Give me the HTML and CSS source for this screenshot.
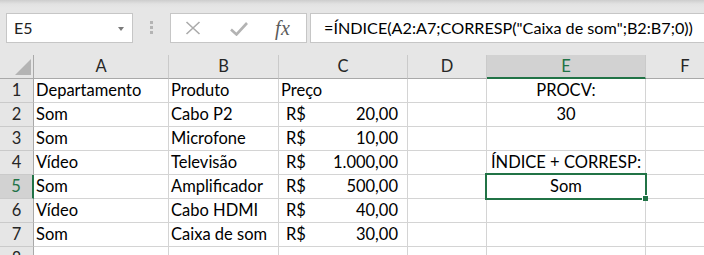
FILE: index.html
```html
<!DOCTYPE html>
<html lang="pt-BR">
<head>
<meta charset="utf-8">
<title>Planilha</title>
<link rel="stylesheet" href="styles.css">
</head>
<body>
<div class="toolbar">
  <div class="namebox"><span>E5</span><i class="caret"></i></div>
  <div class="grip"><i></i><i></i><i></i></div>
  <div class="fxbox">
    <svg class="ic-x" width="16" height="14" viewBox="0 0 16 14"><path d="M1.5 1 L14.5 13 M14.5 1 L1.5 13" stroke="#ababab" stroke-width="1.6" fill="none"/></svg>
    <svg class="ic-ok" width="18" height="14" viewBox="0 0 18 14"><path d="M1 7.5 L6.5 12.5 L17 1" stroke="#b3b3b3" stroke-width="2.6" fill="none"/></svg>
    <span class="fx">fx</span>
  </div>
  <div class="formula">=ÍNDICE(A2:A7;CORRESP("Caixa de som";B2:B7;0))</div>
</div>
<div class="sheet">
  <div class="corner"><i class="tri"></i></div>
  <div class="ch">A</div><div class="ch">B</div><div class="ch">C</div><div class="ch">D</div><div class="ch on">E</div><div class="ch">F</div>

  <div class="rh">1</div>
  <div class="c">Departamento</div><div class="c">Produto</div><div class="c">Preço</div><div class="c"></div><div class="c mid">PROCV:</div><div class="c"></div>

  <div class="rh">2</div>
  <div class="c">Som</div><div class="c">Cabo P2</div><div class="c acc"><span>R$</span><span>20,00</span></div><div class="c"></div><div class="c mid">30</div><div class="c"></div>

  <div class="rh">3</div>
  <div class="c">Som</div><div class="c">Microfone</div><div class="c acc"><span>R$</span><span>10,00</span></div><div class="c"></div><div class="c mid"></div><div class="c"></div>

  <div class="rh">4</div>
  <div class="c">Vídeo</div><div class="c">Televisão</div><div class="c acc"><span>R$</span><span>1.000,00</span></div><div class="c"></div><div class="c mid">ÍNDICE + CORRESP:</div><div class="c"></div>

  <div class="rh on">5</div>
  <div class="c">Som</div><div class="c">Amplificador</div><div class="c acc"><span>R$</span><span>500,00</span></div><div class="c"></div><div class="c mid active">Som<span class="sel"><i class="handle"></i></span></div><div class="c"></div>

  <div class="rh">6</div>
  <div class="c">Vídeo</div><div class="c">Cabo HDMI</div><div class="c acc"><span>R$</span><span>40,00</span></div><div class="c"></div><div class="c mid"></div><div class="c"></div>

  <div class="rh">7</div>
  <div class="c">Som</div><div class="c">Caixa de som</div><div class="c acc"><span>R$</span><span>30,00</span></div><div class="c"></div><div class="c mid"></div><div class="c"></div>

  <div class="rh">8</div>
  <div class="c"></div><div class="c"></div><div class="c"></div><div class="c"></div><div class="c"></div><div class="c"></div>
</div>
</body>
</html>
```
FILE: styles.css
```css
html, body {
  margin: 0;
  padding: 0;
  width: 704px;
  height: 255px;
  overflow: hidden;
  background: #ffffff;
  font-family: "Lato", "Open Sans", sans-serif;
  color: #000;
}

/* ---------- formula bar ---------- */
.toolbar {
  height: 55px;
  box-sizing: border-box;
  padding: 13px 0 0 6px;
  display: flex;
  align-items: flex-start;
  background: linear-gradient(to bottom, #cdcdcd 0, #e2e2e2 4px, #e6e6e6 8px, #e6e6e6 100%);
  white-space: nowrap;
}
.toolbar > * {
  flex: none;
}

.namebox {
  width: 127px;
  height: 30px;
  box-sizing: border-box;
  border: 1px solid #c6c6c6;
  background: #fff;
  display: flex;
  align-items: center;
  justify-content: space-between;
  padding: 0 8px 0 7px;
  font-size: 16px;
  line-height: 28px;
  color: #222;
}

.caret {
  display: block;
  width: 0;
  height: 0;
  border-left: 3.5px solid transparent;
  border-right: 3.5px solid transparent;
  border-top: 4px solid #7a7a7a;
  margin-top: 1px;
}

.grip {
  margin-left: 17px;
  padding-top: 8px;
  width: 3px;
  display: flex;
  flex-direction: column;
  gap: 2px;
}
.grip i {
  display: block;
  width: 3px;
  height: 3px;
  background: #b4b4b4;
}

.fxbox {
  margin-left: 17px;
  width: 137px;
  height: 30px;
  box-sizing: border-box;
  border: 1px solid #c6c6c6;
  background: #fff;
  display: flex;
  align-items: center;
}
.ic-x { margin-left: 14px; flex: none; }
.ic-ok { margin-left: 29px; margin-top: 1px; flex: none; }
.fx {
  margin-left: 27px;
  font-family: "Liberation Serif", "DejaVu Serif", serif;
  font-style: italic;
  font-size: 20px;
  line-height: 28px;
  color: #5b5b5b;
  letter-spacing: 0.5px;
}

.formula {
  margin-left: 3px;
  width: 430px;
  height: 30px;
  box-sizing: border-box;
  border: 1px solid #c6c6c6;
  background: #fff;
  padding-left: 13px;
  font-size: 16.2px;
  line-height: 28px;
  color: #000;
}

/* ---------- sheet grid ---------- */
.sheet {
  display: grid;
  grid-template-columns: 34px 135px 110px 129px 79px 159px 79px;
  grid-auto-rows: 24px;
  font-size: 16.5px;
  line-height: 20px;
  white-space: nowrap;
}

.sheet > div {
  box-sizing: border-box;
  display: flex;
  align-items: flex-end;
  padding-bottom: 2px;
  overflow: visible;
}

.corner {
  background: #e6e6e6;
  border-right: 1px solid #a9a9a9;
  border-bottom: 1px solid #a9a9a9;
  justify-content: flex-end;
  padding: 0 2px 3px 0 !important;
}
.tri {
  display: block;
  width: 16px;
  height: 16px;
  background: #b4b4b4;
  clip-path: polygon(100% 0, 100% 100%, 0 100%);
}

.ch {
  background: #e6e6e6;
  border-right: 1px solid #cacaca;
  border-bottom: 1px solid #a9a9a9;
  justify-content: center;
  color: #262626;
}
.ch.on {
  background: #d2d2d2;
  color: #217346;
  border-bottom: 2px solid #217346;
  padding-bottom: 1px !important;
}

.rh {
  background: #e6e6e6;
  border-right: 1px solid #a9a9a9;
  border-bottom: 1px solid #cacaca;
  justify-content: center;
  color: #262626;
}
.rh.on {
  background: #d2d2d2;
  color: #217346;
  border-right: 2px solid #217346;
}

.c {
  background: #fff;
  border-right: 1px solid #d4d4d4;
  border-bottom: 1px solid #d4d4d4;
  padding-left: 2px;
}
.c.mid {
  justify-content: center;
  padding-left: 0;
}
.c.acc {
  justify-content: space-between;
  padding-left: 7px;
  padding-right: 9px;
}

.c.active {
  position: relative;
}
.sel {
  position: absolute;
  left: -2px;
  top: -2px;
  width: 162px;
  height: 27px;
  box-sizing: border-box;
  border: 2px solid #217346;
  z-index: 2;
}
.handle {
  position: absolute;
  left: 155px;
  top: 20px;
  width: 5px;
  height: 5px;
  background: #217346;
  border: 1px solid #fff;
  border-right: 0;
  border-bottom: 0;
}
```
